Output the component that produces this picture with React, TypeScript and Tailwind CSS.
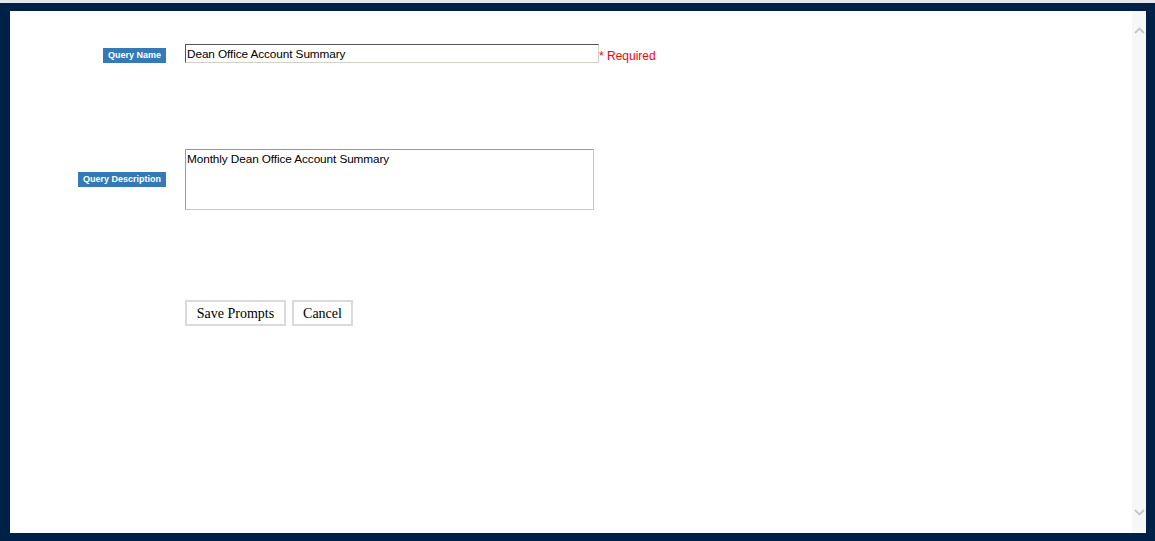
const Label = ({ text }: { text: string }) => (
  <span className="inline-block bg-[#337ab7] text-white font-bold text-[9px] leading-[15px] px-[5px] font-['Liberation_Sans',Arial,sans-serif]">
    {text}
  </span>
);

const App = () => (
  <div className="w-[1155px] h-[541px] bg-[#002147] flex flex-col overflow-hidden">
    {/* page behind the dialog */}
    <div className="h-[3px] bg-[#e4e7eb] shrink-0" />
    <div className="flex-1 flex pl-[10px] pr-[9px] pt-[8px] pb-[8px] min-h-0">
      <div className="flex-1 flex bg-white min-w-0">
        <div className="flex-1 flex flex-col pt-[33px] font-['Liberation_Sans',Arial,sans-serif]">
          {/* Query Name */}
          <div className="flex items-end">
            <div className="w-[156px] flex justify-end">
              <Label text="Query Name" />
            </div>
            <div className="ml-[19px] flex items-end">
              <div className="w-[414px] h-[19px] border border-t-[#555] border-l-[#555] border-r-[#d4d0c8] border-b-[#d4d0c8] text-[11.8px] leading-[19px] pl-[1px] text-black tracking-[-0.1px]">
                Dean Office Account Summary
              </div>
              <span className="text-[12px] leading-[15px] text-[#ff0000] -mb-[1px]">* Required</span>
            </div>
          </div>

          {/* Query Description */}
          <div className="flex items-center mt-[86px]">
            <div className="w-[156px] flex justify-end">
              <Label text="Query Description" />
            </div>
            <div className="ml-[19px] w-[409px] h-[61px] border border-[#c8c8c8] border-t-[#9a9a9a] border-l-[#9a9a9a] text-[11.8px] leading-[16px] pl-[1px] pt-[1px] text-black tracking-[-0.1px]">
              Monthly Dean Office Account Summary
            </div>
          </div>

          {/* Buttons */}
          <div className="flex mt-[90px] pl-[175px] gap-[6px] font-['Liberation_Serif','Times_New_Roman',serif] text-[14px] text-black">
            <button className="h-[26px] w-[101px] border-2 border-[#dadada] bg-white">Save Prompts</button>
            <button className="h-[26px] w-[61px] border-2 border-[#dadada] bg-white">Cancel</button>
          </div>
        </div>

        {/* scrollbar */}
        <div className="w-[14px] bg-[#f7f7f7] flex flex-col justify-between items-center pt-[16px] pb-[17px]">
          <svg width="11" height="7" viewBox="0 0 11 7">
            <path d="M1 6 L5.5 1.5 L10 6" stroke="#c6c6c6" strokeWidth="1.8" fill="none" />
          </svg>
          <svg width="11" height="7" viewBox="0 0 11 7">
            <path d="M1 1 L5.5 5.5 L10 1" stroke="#c6c6c6" strokeWidth="1.8" fill="none" />
          </svg>
        </div>
      </div>
    </div>
  </div>
);

export default App;
